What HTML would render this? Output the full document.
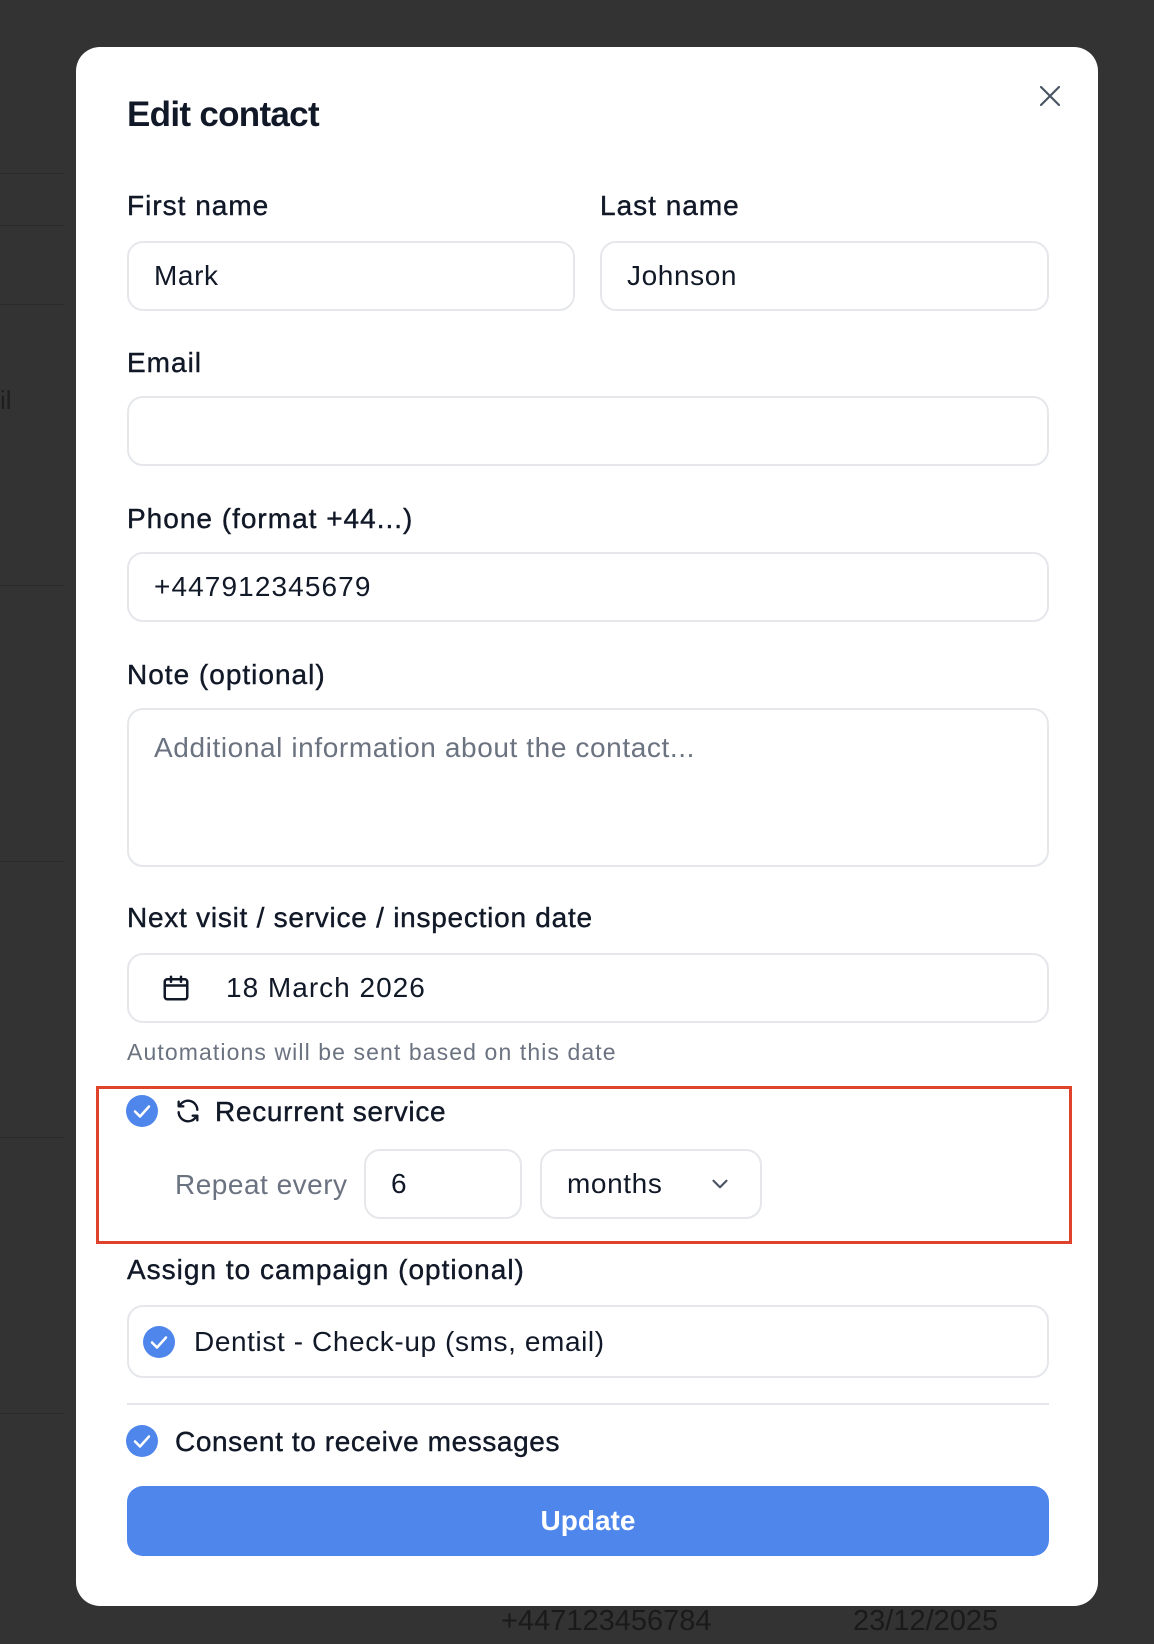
<!DOCTYPE html>
<html><head><meta charset="utf-8"><style>
*{box-sizing:border-box;margin:0;padding:0}
body{width:1154px;height:1644px;background:#333;position:relative;overflow:hidden;font-family:"Liberation Sans",Arial,sans-serif;color:#111827}
.bgl{position:absolute;left:0;width:64px;height:1px;background:#2a2a2a}
.modal{position:absolute;left:76px;top:47px;width:1022px;height:1559px;background:#fff;border-radius:24px}
.a{position:absolute}
.lbl{position:absolute;font-size:28px;color:#111827;line-height:1;letter-spacing:1px;-webkit-text-stroke:0.4px #111827}
.in{position:absolute;border:2px solid #e5e7eb;border-radius:16px;background:#fff;font-size:28px;letter-spacing:0.6px;display:flex;align-items:center;padding-left:25px}
.chk{position:absolute;width:32px;height:32px;border-radius:50%;background:#4f86ec}
.chk svg{position:absolute;left:0;top:0}
</style></head><body>
<div class="bgl" style="top:173px"></div><div class="bgl" style="top:225px"></div><div class="bgl" style="top:304px"></div><div class="bgl" style="top:585px"></div><div class="bgl" style="top:861px"></div><div class="bgl" style="top:1137px"></div><div class="bgl" style="top:1413px"></div>
<div class="a" style="left:0;top:385px;font-size:26px;color:#1e1e1e">il</div>
<div class="a" style="left:501px;top:1605px;font-size:29px;color:#1a1a1a">+447123456784</div>
<div class="a" style="left:853px;top:1605px;font-size:29px;color:#1a1a1a">23/12/2025</div>

<div class="modal"></div>
<div class="a" style="left:127px;top:95px;font-size:35px;font-weight:700;letter-spacing:-0.7px">Edit contact</div>
<svg class="a" style="left:1038px;top:84px" width="24" height="24" viewBox="0 0 24 24"><path d="M3 3L21 21M21 3L3 21" stroke="#4b5563" stroke-width="2.2" stroke-linecap="round"/></svg>

<div class="lbl" style="left:127px;top:192px">First name</div>
<div class="lbl" style="left:600px;top:192px">Last name</div>
<div class="in" style="left:127px;top:241px;width:448px;height:70px">Mark</div>
<div class="in" style="left:600px;top:241px;width:449px;height:70px">Johnson</div>

<div class="lbl" style="left:127px;top:349px">Email</div>
<div class="in" style="left:127px;top:396px;width:922px;height:70px"></div>

<div class="lbl" style="left:127px;top:505px">Phone (format +44...)</div>
<div class="in" style="left:127px;top:552px;width:922px;height:70px;letter-spacing:1.1px">+447912345679</div>

<div class="lbl" style="left:127px;top:661px">Note (optional)</div>
<div class="in" style="left:127px;top:708px;width:922px;height:159px;align-items:flex-start;padding-top:22px;color:#6b7280;letter-spacing:0.6px">Additional information about the contact...</div>

<div class="lbl" style="left:127px;top:904px;letter-spacing:0.75px">Next visit / service / inspection date</div>
<div class="in" style="left:127px;top:953px;width:922px;height:70px;padding-left:97px;letter-spacing:1px">18 March 2026</div>
<svg class="a" style="left:161px;top:973px" width="30" height="30" viewBox="0 0 24 24" fill="none" stroke="#111827" stroke-width="2" stroke-linecap="round"><rect x="3" y="5" width="18" height="16" rx="2"/><path d="M3 10h18M8 3v4M16 3v4"/></svg>
<div class="a" style="left:127px;top:1039px;font-size:23px;color:#6b7280;letter-spacing:1.1px">Automations will be sent based on this date</div>

<div class="a" style="left:96px;top:1086px;width:976px;height:158px;border:3.5px solid #e0432b"></div>
<div class="chk" style="left:126px;top:1095px"><svg width="32" height="32" viewBox="0 0 32 32"><path d="M9 16.5l5 5 9-10" stroke="#fff" stroke-width="2.5" fill="none" stroke-linecap="round" stroke-linejoin="round"/></svg></div>
<svg class="a" style="left:174px;top:1097px" width="28" height="28" viewBox="0 0 24 24" fill="none" stroke="#111827" stroke-width="2" stroke-linecap="round" stroke-linejoin="round"><path d="M20 11a8 8 0 0 0-14.5-4.5M4 4v4h4M4 13a8 8 0 0 0 14.5 4.5M20 20v-4h-4"/></svg>
<div class="lbl" style="left:215px;top:1098px;letter-spacing:0.7px">Recurrent service</div>
<div class="a" style="left:175px;top:1169px;font-size:28px;color:#6b7280;letter-spacing:0.5px">Repeat every</div>
<div class="in" style="left:364px;top:1149px;width:158px;height:70px">6</div>
<div class="in" style="left:540px;top:1149px;width:222px;height:70px">months</div>
<svg class="a" style="left:707px;top:1171px" width="26" height="26" viewBox="0 0 24 24" fill="none" stroke="#4b5563" stroke-width="2" stroke-linecap="round" stroke-linejoin="round"><path d="M6 9l6 6 6-6"/></svg>

<div class="lbl" style="left:127px;top:1256px">Assign to campaign (optional)</div>
<div class="in" style="left:127px;top:1305px;width:922px;height:73px;padding-left:65px">Dentist - Check-up (sms, email)</div>
<div class="chk" style="left:143px;top:1326px"><svg width="32" height="32" viewBox="0 0 32 32"><path d="M9 16.5l5 5 9-10" stroke="#fff" stroke-width="2.5" fill="none" stroke-linecap="round" stroke-linejoin="round"/></svg></div>

<div class="a" style="left:127px;top:1403px;width:922px;height:2px;background:#e5e7eb"></div>
<div class="chk" style="left:126px;top:1425px"><svg width="32" height="32" viewBox="0 0 32 32"><path d="M9 16.5l5 5 9-10" stroke="#fff" stroke-width="2.5" fill="none" stroke-linecap="round" stroke-linejoin="round"/></svg></div>
<div class="lbl" style="left:175px;top:1428px;letter-spacing:0.6px">Consent to receive messages</div>

<div class="a" style="left:127px;top:1486px;width:922px;height:70px;border-radius:16px;background:#4f86ec;color:#fff;font-size:28px;font-weight:700;display:flex;align-items:center;justify-content:center">Update</div>
</body></html>
